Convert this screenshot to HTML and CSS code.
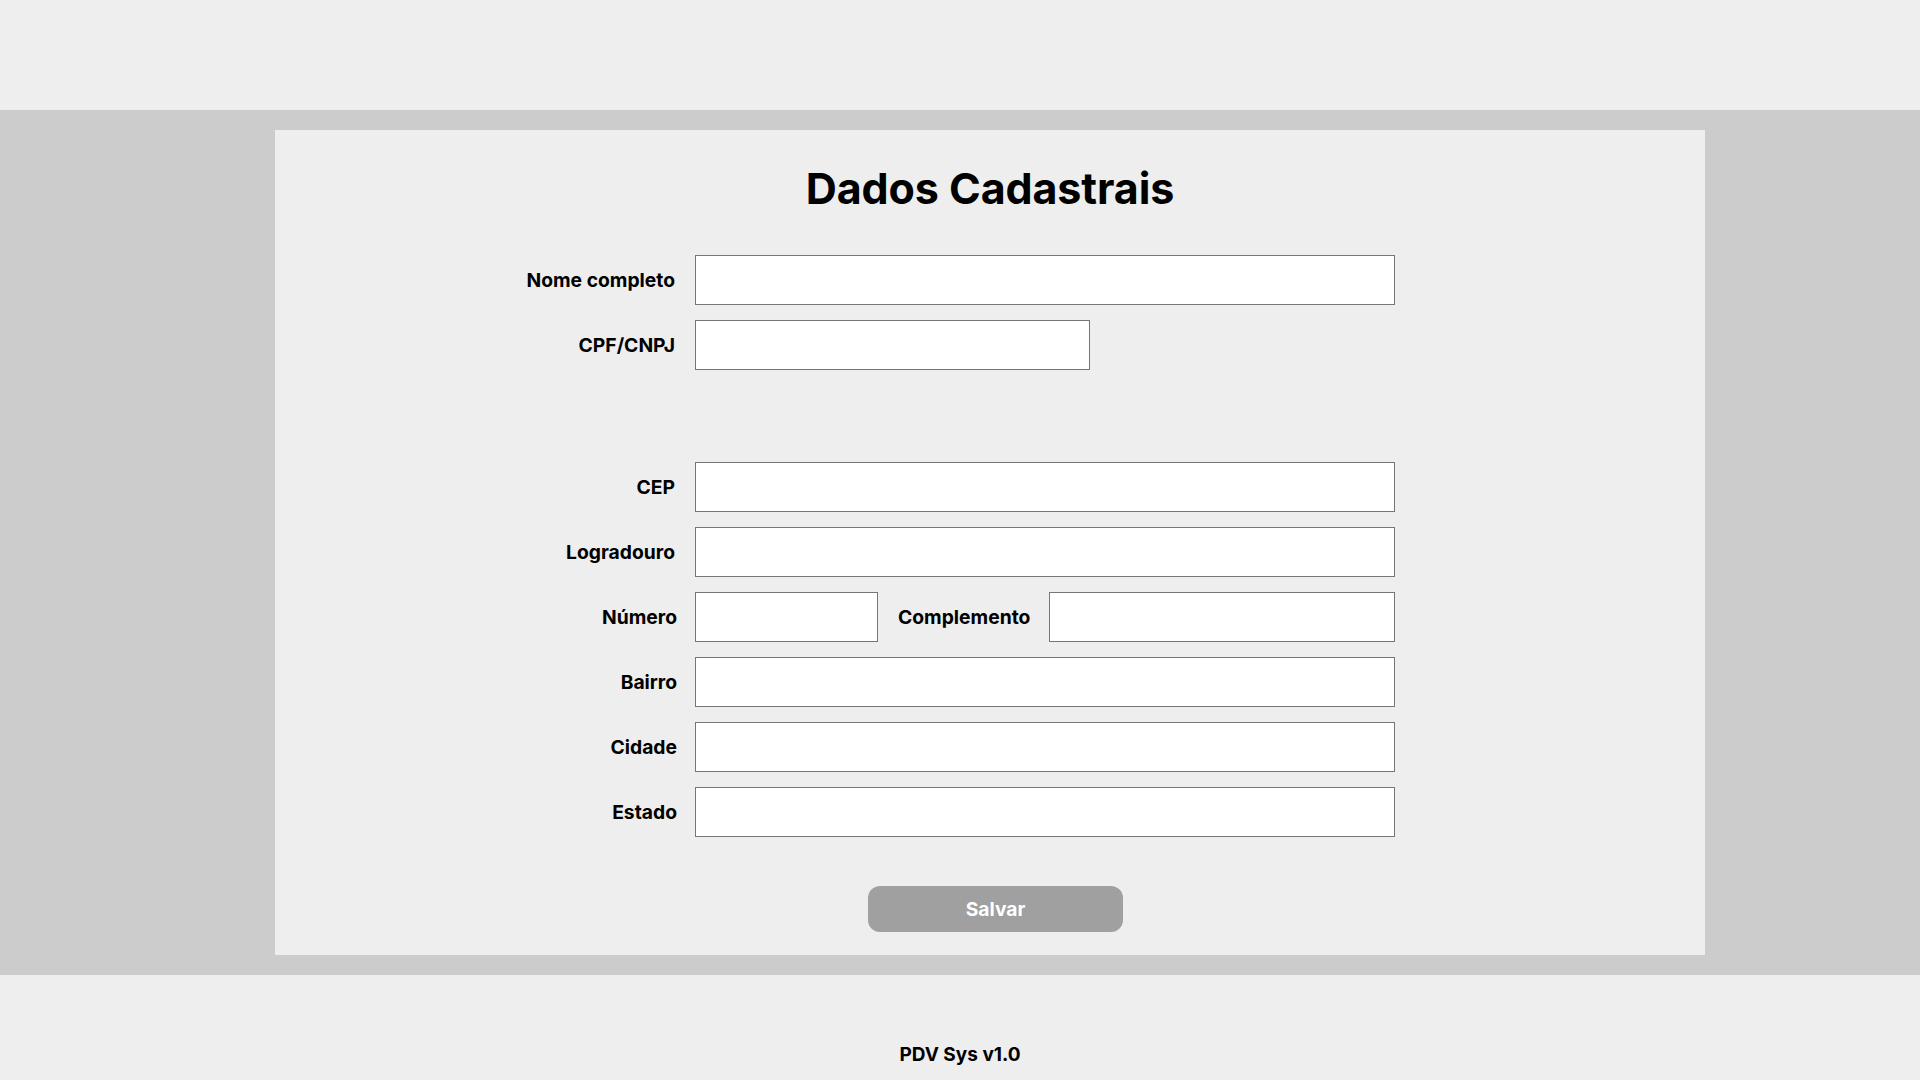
FILE: index.html
```html
<!DOCTYPE html>
<html lang="pt-BR">
<head>
<meta charset="utf-8">
<title>Dados Cadastrais</title>
<link rel="stylesheet" href="styles.css">
</head>
<body>
<header class="topbar"></header>
<main class="band">
  <section class="card">
    <h1 class="title">Dados Cadastrais</h1>
    <form class="form">
      <div class="row">
        <label class="label">Nome completo</label>
        <input class="field" type="text">
      </div>
      <div class="row">
        <label class="label">CPF/CNPJ</label>
        <input class="field field-short" type="text">
      </div>
      <div class="row row-spaced">
        <label class="label">CEP</label>
        <input class="field" type="text">
      </div>
      <div class="row">
        <label class="label">Logradouro</label>
        <input class="field" type="text">
      </div>
      <div class="row">
        <label class="label label-b">Número</label>
        <div class="split">
          <input class="field field-num" type="text">
          <label class="label-inline">Complemento</label>
          <input class="field field-grow" type="text">
        </div>
      </div>
      <div class="row">
        <label class="label label-b">Bairro</label>
        <input class="field" type="text">
      </div>
      <div class="row">
        <label class="label label-b">Cidade</label>
        <input class="field" type="text">
      </div>
      <div class="row">
        <label class="label label-b">Estado</label>
        <input class="field" type="text">
      </div>
      <div class="actions">
        <button class="save" type="button">Salvar</button>
      </div>
    </form>
  </section>
</main>
<footer class="footer">PDV Sys v1.0</footer>
</body>
</html>
```

FILE: styles.css
```css
* { box-sizing: border-box; }
html, body {
  margin: 0;
  padding: 0;
  background: #eeeeee;
  font-family: Inter, "Liberation Sans", sans-serif;
  color: #000;
}
.topbar {
  height: 110px;
}
.band {
  background: #cccccc;
  padding: 20px 215px 20px 275px;
}
.card {
  background: #eeeeee;
  height: 825px;
  padding-top: 33px;
}
.title {
  margin: 0;
  text-align: center;
  font-size: 43px;
  font-weight: 700;
  line-height: 51px;
  letter-spacing: -0.1px;
}
.form {
  margin: 41px 0 0 220px;
  width: 900px;
}
.row {
  display: grid;
  grid-template-columns: 180px 700px;
  column-gap: 20px;
  align-items: center;
  height: 50px;
  margin-bottom: 15px;
}
.row-spaced {
  margin-top: 92px;
}
.label, .label-inline {
  font-size: 19.3px;
  font-weight: 700;
  white-space: nowrap;
}
.label {
  text-align: right;
}
.label-b {
  margin-right: -2px;
}
.field {
  height: 50px;
  width: 700px;
  margin: 0;
  border: 1px solid #767676;
  border-radius: 0;
  background: #ffffff;
  font-family: inherit;
  font-size: 18px;
  padding: 0 10px;
}
.field-short {
  width: 395px;
}
.split {
  display: flex;
  align-items: center;
  width: 700px;
}
.field-num {
  width: 183px;
  flex: none;
}
.label-inline {
  margin: 0 19px 0 20px;
}
.field-grow {
  flex: 1;
  width: auto;
  min-width: 0;
}
.actions {
  display: flex;
  justify-content: center;
  margin-top: 49px;
  padding-left: 101px;
}
.save {
  width: 255px;
  height: 46px;
  border: none;
  border-radius: 12px;
  background: #a0a0a0;
  color: #ffffff;
  font-family: inherit;
  font-size: 19.3px;
  font-weight: 700;
}
.footer {
  height: 105px;
  padding-top: 68px;
  text-align: center;
  font-size: 19px;
  font-weight: 700;
}
```
